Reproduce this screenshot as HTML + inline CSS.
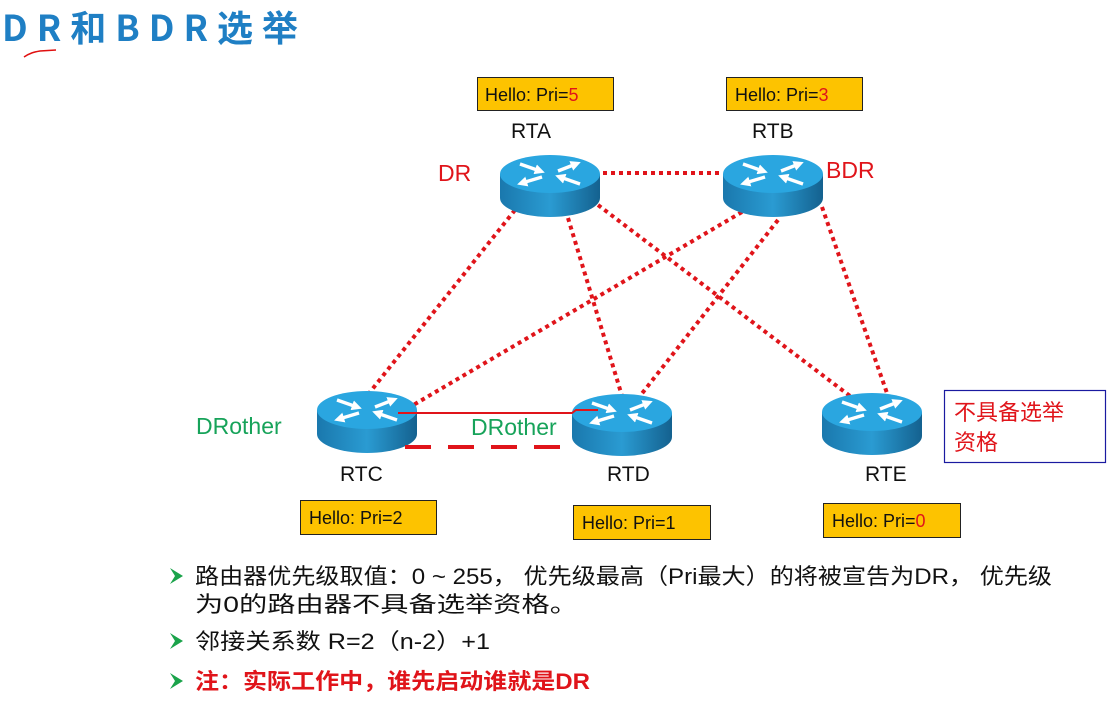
<!DOCTYPE html>
<html><head><meta charset="utf-8"><style>
html,body{margin:0;padding:0;background:#fff;width:1110px;height:702px;overflow:hidden}
svg{display:block}
text{font-family:"Liberation Sans","Noto Sans CJK SC",sans-serif}
.cjk{font-family:"Noto Sans CJK SC","Liberation Sans",sans-serif}
</style></head><body>
<svg width="1110" height="702" viewBox="0 0 1110 702" xmlns="http://www.w3.org/2000/svg">
<defs>
<linearGradient id="body" x1="0" x2="1" y1="0" y2="0">
<stop offset="0" stop-color="#1a78ad"/><stop offset="0.5" stop-color="#2a9bd2"/><stop offset="1" stop-color="#14618f"/>
</linearGradient>
<marker id="ah" viewBox="0 0 10 10" refX="5" refY="5" markerWidth="3" markerHeight="3" orient="auto">
<path d="M0,0 L10,5 L0,10 Z" fill="#fff"/></marker>
<g id="rt">
<path d="M-50,0 L-50,24 A50,19 0 0 0 50,24 L50,0 Z" fill="url(#body)"/>
<ellipse cx="0" cy="0" rx="50" ry="19" fill="#2aa6e0"/>
<g stroke="#fff" stroke-width="3.4" marker-end="url(#ah)" fill="none">
<line x1="-30" y1="-10" x2="-10" y2="-3"/>
<line x1="-8" y1="3" x2="-28" y2="9"/>
<line x1="8" y1="-3" x2="26" y2="-10"/>
<line x1="30" y1="10" x2="10" y2="3"/>
</g>
</g>
</defs>

<text x="2" y="41" font-size="36" font-weight="bold" fill="#1f7fc4" class="cjk" textLength="296" lengthAdjust="spacing">DR和BDR选举</text>
<path d="M24,57 C30,53 34,52 40,51 L56,50" stroke="#e01010" stroke-width="1.5" fill="none"/>

<g stroke="#e0141a" stroke-width="4" stroke-dasharray="4 4" fill="none">
<line x1="603" y1="173" x2="720" y2="173"/>
<line x1="515" y1="210" x2="370" y2="392"/>
<line x1="568" y1="218" x2="622" y2="396"/>
<line x1="598" y1="205" x2="850" y2="396"/>
<line x1="742" y1="212" x2="398" y2="414"/>
<line x1="778" y1="220" x2="640" y2="396"/>
<line x1="822" y1="207" x2="888" y2="396"/>
</g>

<use href="#rt" x="550" y="174"/>
<use href="#rt" x="773" y="174"/>
<use href="#rt" x="367" y="410"/>
<use href="#rt" x="622" y="413"/>
<use href="#rt" x="872" y="412"/>

<path d="M398,413 L572,413 L576,410 L598,410" stroke="#e0141a" stroke-width="2" fill="none"/>
<line x1="405" y1="447" x2="572" y2="447" stroke="#e0141a" stroke-width="4" stroke-dasharray="26 17"/>

<g stroke="#222" stroke-width="1" fill="#fdc300">
<rect x="477.5" y="77.5" width="136" height="33"/>
<rect x="726.5" y="77.5" width="136" height="33"/>
<rect x="300.5" y="500.5" width="136" height="34"/>
<rect x="573.5" y="505.5" width="137" height="34"/>
<rect x="823.5" y="503.5" width="137" height="34"/>
</g>
<g font-size="18" fill="#111">
<text x="485" y="101">Hello: Pri=<tspan fill="#e0141a">5</tspan></text>
<text x="735" y="101">Hello: Pri=<tspan fill="#e0141a">3</tspan></text>
<text x="309" y="524">Hello: Pri=2</text>
<text x="582" y="529">Hello: Pri=1</text>
<text x="832" y="527">Hello: Pri=<tspan fill="#e0141a">0</tspan></text>
</g>
<g font-size="21" fill="#111">
<text x="511" y="138">RTA</text>
<text x="752" y="138">RTB</text>
<text x="340" y="481">RTC</text>
<text x="607" y="481">RTD</text>
<text x="865" y="481">RTE</text>
</g>
<text x="438" y="181" font-size="23" fill="#e0141a">DR</text>
<text x="826" y="178" font-size="23" fill="#e0141a">BDR</text>
<text x="196" y="434" font-size="23" fill="#17a35a">DRother</text>
<text x="471" y="435" font-size="23" fill="#17a35a">DRother</text>

<rect x="944.5" y="390.5" width="161" height="72" fill="none" stroke="#1a1aa0" stroke-width="1.2"/>
<text x="954" y="420" font-size="22" fill="#e0141a" class="cjk">不具备选举</text>
<text x="954" y="450" font-size="22" fill="#e0141a" class="cjk">资格</text>

<g fill="#1aa34a">
<path d="M170,568 L183,576 L170,584 L175,576 Z"/>
<path d="M170,633 L183,641 L170,649 L175,641 Z"/>
<path d="M170,673 L183,681 L170,689 L175,681 Z"/>
</g>
<g font-size="22" fill="#111" class="cjk">
<text x="195" y="584" textLength="857" lengthAdjust="spacingAndGlyphs">路由器优先级取值：0 ~ 255， 优先级最高（Pri最大）的将被宣告为DR， 优先级</text>
<text x="195" y="612" textLength="383" lengthAdjust="spacingAndGlyphs">为0的路由器不具备选举资格。</text>
<text x="195" y="649" textLength="295" lengthAdjust="spacingAndGlyphs">邻接关系数 R=2（n-2）+1</text>
<text x="195" y="689" font-weight="bold" fill="#e0141a" textLength="395" lengthAdjust="spacingAndGlyphs">注：实际工作中，谁先启动谁就是DR</text>
</g>
</svg>
</body></html>
